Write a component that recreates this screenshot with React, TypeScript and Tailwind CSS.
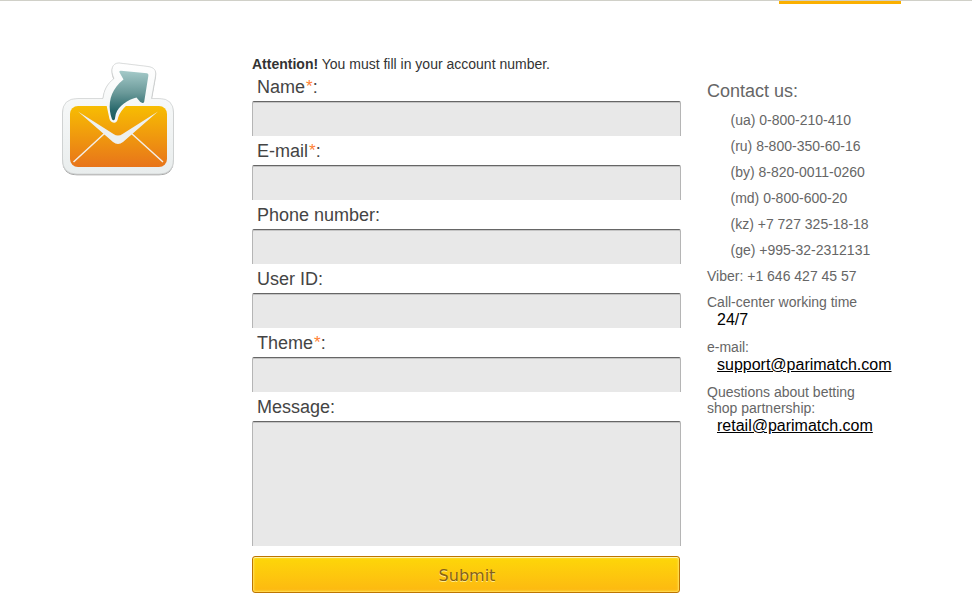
type FieldProps = { label: string; required?: boolean; multiline?: boolean };

const fields: FieldProps[] = [
  { label: "Name", required: true },
  { label: "E-mail", required: true },
  { label: "Phone number" },
  { label: "User ID" },
  { label: "Theme", required: true },
  { label: "Message", multiline: true },
];

const phones = [
  "(ua) 0-800-210-410",
  "(ru) 8-800-350-60-16",
  "(by) 8-820-0011-0260",
  "(md) 0-800-600-20",
  "(kz) +7 727 325-18-18",
  "(ge) +995-32-2312131",
];

const controlClass =
  "block w-full resize-none rounded-t-[2px] border-x border-t border-x-[#b5b5b5] border-t-[#666] bg-[#e8e8e8] shadow-[inset_0_1px_0_#c4c4c4] outline-none";

function Field({ label, required, multiline }: FieldProps) {
  return (
    <label className="block">
      <span className="block h-[29px] pl-[5px] text-[18px] leading-[31px] text-[#444]">
        {label}
        {required && <span className="pl-px align-[1px] text-[17px] leading-none text-[#ff8136]">*</span>}:
      </span>
      {multiline ? (
        <textarea className={`${controlClass} h-[125px]`} />
      ) : (
        <input className={`${controlClass} h-[35px]`} />
      )}
    </label>
  );
}

function MailIcon() {
  return (
    <svg className="block" width="126" height="126" viewBox="55 56 126 126">
      <defs>
        <linearGradient id="envelope" x1="0" y1="0" x2="0" y2="1">
          <stop offset="0" stopColor="#f7bd02" />
          <stop offset="1" stopColor="#e8741a" />
        </linearGradient>
        <linearGradient id="arrow" x1="0" y1="0" x2="0" y2="1">
          <stop offset="0" stopColor="#a5cac9" />
          <stop offset="0.45" stopColor="#6a9999" />
          <stop offset="0.8" stopColor="#28686b" />
          <stop offset="1" stopColor="#1f5c60" />
        </linearGradient>
        <linearGradient id="paper" x1="0" y1="0" x2="0" y2="1">
          <stop offset="0" stopColor="#fff" />
          <stop offset="0.4" stopColor="#f5f7f7" />
          <stop offset="1" stopColor="#e9eded" />
        </linearGradient>
        <filter id="edge" x="-10%" y="-10%" width="120%" height="120%">
          <feDropShadow dx="0" dy="0.7" stdDeviation="0.6" floodColor="#000" floodOpacity="0.55" />
        </filter>
      </defs>
      <path
        filter="url(#edge)"
        fill="url(#paper)"
        stroke="#c9cccc"
        strokeWidth="0.6"
        d="M78 98.500H103C104 90 107 84 114 78.500C110 70 112 63 119 63L148 66.500C154 67.500 156.500 70 155.500 76L151.500 98.500H159Q173.500 98.500 173.500 113V159Q173.500 174 159 174H77Q62.500 174 62.500 159V113Q62.500 98.500 78 98.500Z"
      />
      <rect x="70" y="106" width="97" height="61" rx="8" fill="url(#envelope)" />
      <path d="M73.500 162L105 133M163 162L131 133" stroke="#f4eee6" strokeWidth="1.5" />
      <path d="M78 111.500L113.500 134Q118 137 122.500 134L158 111.500L123 142Q118 146 113 142Z" fill="#edf0f0" />
      <path d="M106.500 105L109.500 119Q111 122.800 114.500 122.800Q117.500 122 118 118Q120 111 127 105Z" fill="#f5f7f7" />
      <path
        d="M112 119.300C108 108 109 96 116.500 86.500Q119.500 82.500 123.500 79.500L119.300 72Q119.300 70.600 121 70.700L147 73.300Q148.700 73.700 148.400 75.500L144.200 101.700Q143.500 103.500 142 102.700L140.300 102L136.500 97.500C128 99.500 118.500 106 115.800 114L114.800 119.300Q113.500 121 112 119.300Z"
        fill="url(#arrow)"
      />
    </svg>
  );
}

export default function App() {
  return (
    <div className="h-[595px] overflow-hidden bg-white font-['Liberation_Sans',Arial,sans-serif]">
      <header className="h-1 border-t border-[#d0d0c8]">
        <div className="ml-[779px] h-[3px] w-[122px] bg-[#fbb000]" />
      </header>
      <main className="flex">
        <aside className="w-[252px] shrink-0 pt-[52px] pl-[55px]">
          <MailIcon />
        </aside>
        <form className="w-[429px] shrink-0 pt-[52px]">
          <p className="h-4 text-[14px] leading-4 text-[#333]">
            <strong>Attention!</strong> You must fill in your account number.
          </p>
          {fields.map((field) => (
            <Field key={field.label} {...field} />
          ))}
          <button
            type="button"
            className="mt-[10px] block h-[37px] w-[428px] rounded-[3px] border border-[#bd7500] bg-linear-to-b from-[#fdd708] to-[#fdb811] pt-[2px] pl-[2px] font-['DejaVu_Sans',Verdana,sans-serif] text-[16px] text-[#866019] shadow-[inset_0_1px_0_#fff3a8,inset_0_0_2px_1px_#ffe160] [text-shadow:0_1px_0_#ffed8b]"
          >
            Submit
          </button>
        </form>
        <section className="ml-[26px] w-[200px] pt-[76px] text-[14px] leading-4 text-[#666]">
          <h2 className="h-[22px] text-[18px] leading-[22px]">Contact us:</h2>
          <ul className="mt-[5px] pl-[23.5px]">
            {phones.map((phone) => (
              <li key={phone} className="h-[26px] leading-[26px]">
                {phone}
              </li>
            ))}
          </ul>
          <p className="leading-[26px]">Viber: +1 646 427 45 57</p>
          <p className="mt-[5px]">Call-center working time</p>
          <p className="h-[18px] pl-[10px] text-[16px] leading-[20px] text-black">24/7</p>
          <p className="mt-[11px]">e-mail:</p>
          <a className="block h-[18px] pl-[10px] text-[16px] leading-[20px] text-black underline">support@parimatch.com</a>
          <p className="mt-[11px]">
            Questions about betting
            <br />
            shop partnership:
          </p>
          <a className="block h-[18px] pl-[10px] text-[16px] leading-[20px] text-black underline">retail@parimatch.com</a>
        </section>
      </main>
    </div>
  );
}
